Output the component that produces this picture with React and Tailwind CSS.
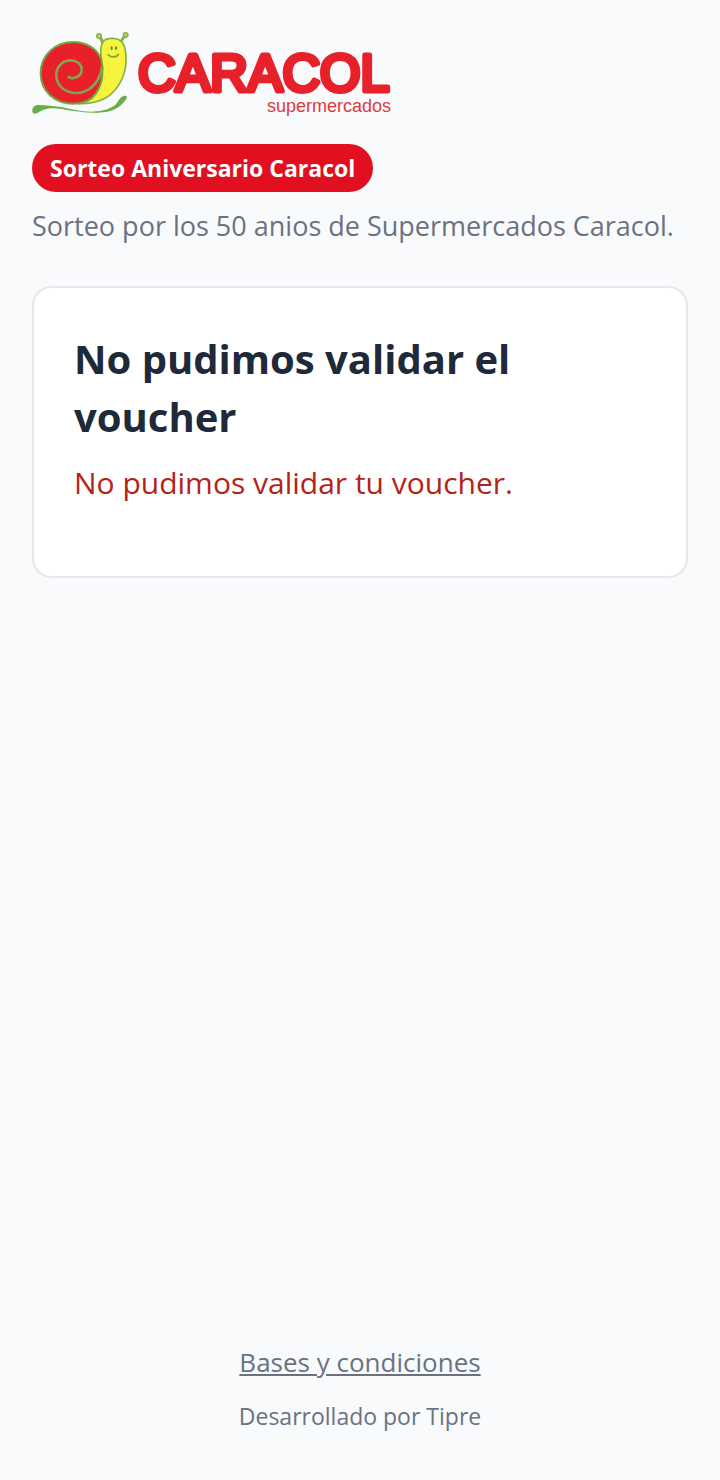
// Snail + wordmark of the supermarket
function Logo() {
  return (
    <svg viewBox="0 0 360 88" className="block h-22 w-90 max-w-full" role="img" aria-label="Caracol supermercados">
      <g transform="translate(-8 -8) scale(0.3333)" strokeLinecap="round" strokeLinejoin="round">
        {/* body and horns */}
        <path
          d="M236 56C234 46 231 43 226 39M292 52C294 46 297 41 303 37"
          fill="none" stroke="#7fb24a" strokeWidth="9"
        />
        <circle cx="225" cy="36" r="7" fill="#b9cf55" stroke="#7fb24a" strokeWidth="4" />
        <circle cx="305" cy="33" r="7" fill="#b9cf55" stroke="#7fb24a" strokeWidth="4" />
        <path
          d="M232 104C228 76 232 53 246 46C262 41 282 42 292 52C306 66 308 92 305 126C300 166 275 205 245 222C220 236 190 240 160 239Z"
          fill="#f8f33c" stroke="#7fb24a" strokeWidth="5"
        />
        {/* shell */}
        <path
          d="M232 106C220 74 187 54 148 54C92 54 50 94 50 148C50 202 92 239 148 239C178 239 202 229 216 208C236 180 240 140 232 106Z"
          fill="#e8202a" stroke="#6fa843" strokeWidth="6"
        />
        <path
          d="M134 159C148 167 172 158 173 139C174 119 157 108 137 109C113 111 97 130 97 153C97 184 122 207 157 207C196 207 228 174 233 132"
          fill="none" stroke="#86a050" strokeWidth="8"
        />
        {/* face */}
        <path d="M263 70V75M276 70V75" stroke="#5f8d32" strokeWidth="6" />
        <path d="M253 92C260 101 278 101 283 91" fill="none" stroke="#7da33b" strokeWidth="5" />
        {/* trail */}
        <path
          d="M25 262C24 249 32 243 46 243C78 244 106 247 140 255C186 266 235 268 268 247C285 236 284 219 300 216C310 213 311 222 304 229C287 252 263 266 222 266C174 268 135 257 92 253C62 252 54 260 40 267C31 271 26 269 25 262Z"
          fill="#68ad45"
        />
      </g>
      <text
        x="106" y="59"
        fill="#e8202a" stroke="#e8202a" strokeWidth="5" strokeLinejoin="round"
        className="font-['Liberation_Sans',sans-serif] text-[52px]"
      >
        CARACOL
      </text>
      <text
        x="359" y="80" textAnchor="end" fill="#dc3a3f"
        className="font-['Liberation_Sans',sans-serif] text-[18px]"
      >
        supermercados
      </text>
    </svg>
  );
}

function Header() {
  return (
    <header className="flex flex-col items-start">
      <Logo />
      <span className="mt-6 rounded-full bg-[#e10f1f] px-[18px] py-2 text-[23px] leading-8 font-bold text-white">
        Sorteo Aniversario Caracol
      </span>
      <p className="mt-3 text-[27px] leading-11 text-gray-500">
        Sorteo por los 50 anios de Supermercados Caracol.
      </p>
    </header>
  );
}

function VoucherError() {
  return (
    <section className="mt-[38px] rounded-[20px] border-2 border-gray-200 bg-white px-10 pt-[42px] pb-[68px]">
      <h1 className="text-[40px] leading-[58px] font-bold text-gray-800">
        No pudimos validar el voucher
      </h1>
      <p className="mt-3 text-[30px] leading-[50px] text-[#b42318]">
        No pudimos validar tu voucher.
      </p>
    </section>
  );
}

function Footer() {
  return (
    <footer className="mt-auto flex flex-col items-center gap-5 text-gray-500">
      <a href="#bases" className="text-[26px] leading-9 underline">
        Bases y condiciones
      </a>
      <p className="text-[23px] leading-8">Desarrollado por Tipre</p>
    </footer>
  );
}

export default function App() {
  return (
    <main className="flex min-h-screen flex-col bg-[#f8fafc] px-8 pt-8 pb-12 font-['Open_Sans','Noto_Sans',sans-serif]">
      <Header />
      <VoucherError />
      <Footer />
    </main>
  );
}
